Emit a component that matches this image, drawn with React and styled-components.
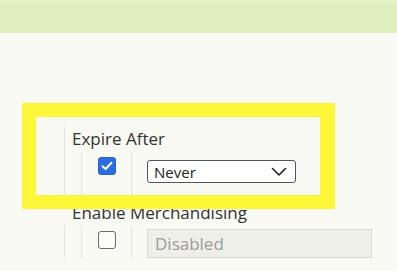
import React from 'react';
import styled, { createGlobalStyle } from 'styled-components';

const Global = createGlobalStyle`
  body {
    margin: 0;
    background: #f9faf3;
    font-family: "Open Sans", "Noto Sans", sans-serif;
    color: #333;
  }
`;

const Page = styled.div`
  position: relative;
  width: 397px;
  height: 271px;
  overflow: hidden;
  background: #f9faf3;
`;

const Header = styled.header`
  height: 33px;
  box-sizing: border-box;
  background: #dfeebe;
  border-top: 3px solid #e4f1cb;
  border-bottom: 1px solid #e3edc9;
`;

const Form = styled.div`
  padding-top: 93px;
  padding-left: 64px;
`;

const Group = styled.section`
  display: flex;
  flex-direction: column;
`;

const Label = styled.div`
  font-size: 17px;
  line-height: 26px;
  padding-left: 7px;
  color: #333;
  border-left: ${(p) => (p.$ruled ? '1px solid #e3e4da' : '1px solid transparent')};
`;

const FieldRow = styled.div`
  display: grid;
  grid-template-columns: 17px 50px 1fr;
  height: ${(p) => p.$h}px;
`;

const Cell = styled.div`
  border-left: 1px solid #e3e4da;
  display: flex;
  align-items: flex-start;
  padding-top: ${(p) => p.$pt || 0}px;
  padding-left: ${(p) => p.$pl || 0}px;
  justify-content: ${(p) => (p.$center ? 'center' : 'flex-start')};
`;

const Check = styled.span`
  width: 18px;
  height: 18px;
  box-sizing: border-box;
  border-radius: 3px;
  display: flex;
  align-items: center;
  justify-content: center;
  background: ${(p) => (p.$on ? '#2b6de0' : '#fbfbf8')};
  border: ${(p) => (p.$on ? '1px solid #2563d6' : '1.5px solid #6b6b6b')};
`;

const SelectBox = styled.div`
  width: 149px;
  height: 23px;
  box-sizing: border-box;
  border: 1px solid #555;
  border-radius: 3px;
  background: #fff;
  display: flex;
  align-items: center;
  justify-content: space-between;
  padding: 0 8px 0 6px;
  font-size: 15px;
  color: #222;
`;

const DisabledInput = styled.div`
  width: 225px;
  height: 29px;
  box-sizing: border-box;
  border: 1px solid #d9dad2;
  background: #efefea;
  display: flex;
  align-items: center;
  padding-left: 7px;
  font-size: 17px;
  color: #9a9a9a;
`;

const Highlight = styled.div`
  position: absolute;
  left: 22px;
  top: 103px;
  width: 313px;
  height: 106px;
  box-sizing: border-box;
  border: 14px solid #fdf73a;
  border-right-width: 15px;
  pointer-events: none;
`;

const App = () => {
  return (
    <>
      <Global />
      <Page>
        <Header />
        <Form>
          <Group>
            <Label $ruled>Expire After</Label>
            <FieldRow $h={48}>
              <Cell />
              <Cell $center $pt={5}>
                <Check $on>
                  <svg width="12" height="10" viewBox="0 0 12 10">
                    <path d="M1.5 5.2 L4.6 8 L10.5 1.8" fill="none" stroke="#fff" strokeWidth="2" strokeLinecap="round" strokeLinejoin="round" />
                  </svg>
                </Check>
              </Cell>
              <Cell $pt={8} $pl={15}>
                <SelectBox>
                  <span>Never</span>
                  <svg width="16" height="10" viewBox="0 0 16 10">
                    <path d="M1.5 1.5 L8 8 L14.5 1.5" fill="none" stroke="#222" strokeWidth="1.6" strokeLinecap="round" strokeLinejoin="round" />
                  </svg>
                </SelectBox>
              </Cell>
            </FieldRow>
          </Group>
          <Group>
            <Label>Enable Merchandising</Label>
            <FieldRow $h={32}>
              <Cell />
              <Cell $center $pt={5}>
                <Check />
              </Cell>
              <Cell $pt={3} $pl={15}>
                <DisabledInput>Disabled</DisabledInput>
              </Cell>
            </FieldRow>
          </Group>
        </Form>
        <Highlight />
      </Page>
    </>
  );
};

export default App;
